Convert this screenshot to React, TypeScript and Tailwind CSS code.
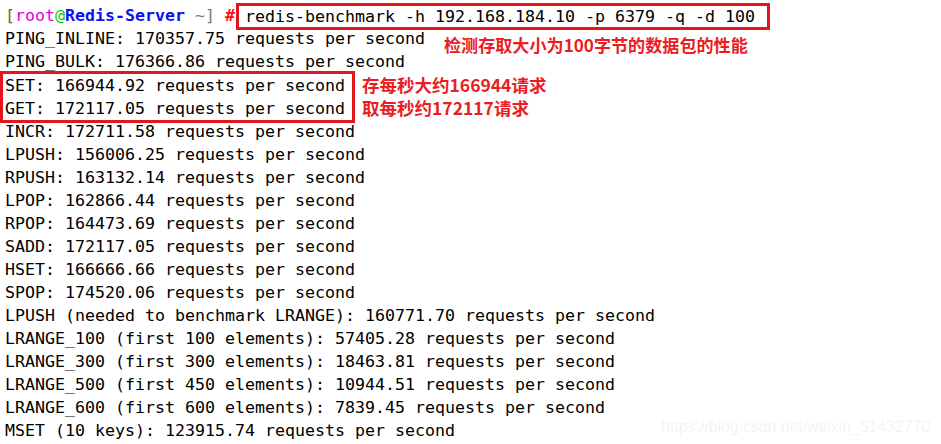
const mono = { fontFamily: '"DejaVu Sans Mono", "Liberation Mono", monospace' };

const plainLines = [
  'INCR: 172711.58 requests per second',
  'LPUSH: 156006.25 requests per second',
  'RPUSH: 163132.14 requests per second',
  'LPOP: 162866.44 requests per second',
  'RPOP: 164473.69 requests per second',
  'SADD: 172117.05 requests per second',
  'HSET: 166666.66 requests per second',
  'SPOP: 174520.06 requests per second',
  'LPUSH (needed to benchmark LRANGE): 160771.70 requests per second',
  'LRANGE_100 (first 100 elements): 57405.28 requests per second',
  'LRANGE_300 (first 300 elements): 18463.81 requests per second',
  'LRANGE_500 (first 450 elements): 10944.51 requests per second',
  'LRANGE_600 (first 600 elements): 7839.45 requests per second',
  'MSET (10 keys): 123915.74 requests per second',
];

function Note({ children, size }: { children: React.ReactNode; size: string }) {
  return (
    <span
      className={`font-bold text-[#ec1c24] whitespace-nowrap ${size}`}
      style={{ fontFamily: '"Noto Sans CJK SC", "Noto Sans", sans-serif' }}
    >
      {children}
    </span>
  );
}

export default function App() {
  return (
    <div className="relative w-[941px] h-[444px] bg-white overflow-hidden">
      <div className="flex flex-col pt-[5px] pl-[5px] text-[16.61px] text-black" style={mono}>
        {/* prompt + command */}
        <div className="flex items-center h-[23px] whitespace-pre">
          <span className="text-[#6b6b2e]">[</span>
          <span className="text-[#e000e0]">root</span>
          <span className="text-[#00d000]">@</span>
          <span className="text-[#1010f0] font-bold">Redis-Server</span>
          <span className="text-[#7a7a7a]"> ~]</span>
          <span> </span>
          <span className="text-[#ff1010] font-bold">#</span>
          <span className="ml-[1px] h-[27px] border-[3px] border-[#e3151f] pl-[6px] pr-[12px] leading-[21px]">
            redis-benchmark -h 192.168.184.10 -p 6379 -q -d 100
          </span>
        </div>

        <div className="flex items-center h-[23px] whitespace-pre">
          <span>PING_INLINE: 170357.75 requests per second</span>
          <span className="ml-[19px] mt-[13px]">
            <Note size="text-[17.1px]">检测存取大小为100字节的数据包的性能</Note>
          </span>
        </div>
        <div className="flex items-center h-[23px] whitespace-pre">PING_BULK: 176366.86 requests per second</div>

        {/* SET / GET */}
        <div className="flex items-center h-[46px]">
          <div className="-ml-[5px] w-[355px] h-[52px] border-[3px] border-[#e3151f] pl-[2px] flex flex-col justify-center whitespace-pre">
            <div className="h-[23px] leading-[23px]">SET: 166944.92 requests per second</div>
            <div className="h-[23px] leading-[23px]">GET: 172117.05 requests per second</div>
          </div>
          <div className="ml-[7px] flex flex-col">
            <div className="h-[23px] flex items-center">
              <Note size="text-[17.5px]">存每秒大约166944请求</Note>
            </div>
            <div className="h-[23px] flex items-center">
              <Note size="text-[17.5px]">取每秒约172117请求</Note>
            </div>
          </div>
        </div>

        {plainLines.map((l) => (
          <div key={l} className="h-[23px] leading-[23px] whitespace-pre">
            {l}
          </div>
        ))}
      </div>

      <div
        className="absolute right-[11px] top-[415px] text-[15.8px] text-[#f4f4f4]"
        style={{ fontFamily: '"Liberation Sans", Arial, sans-serif' }}
      >
        https://blog.csdn.net/weixin_51432770
      </div>
    </div>
  );
}
